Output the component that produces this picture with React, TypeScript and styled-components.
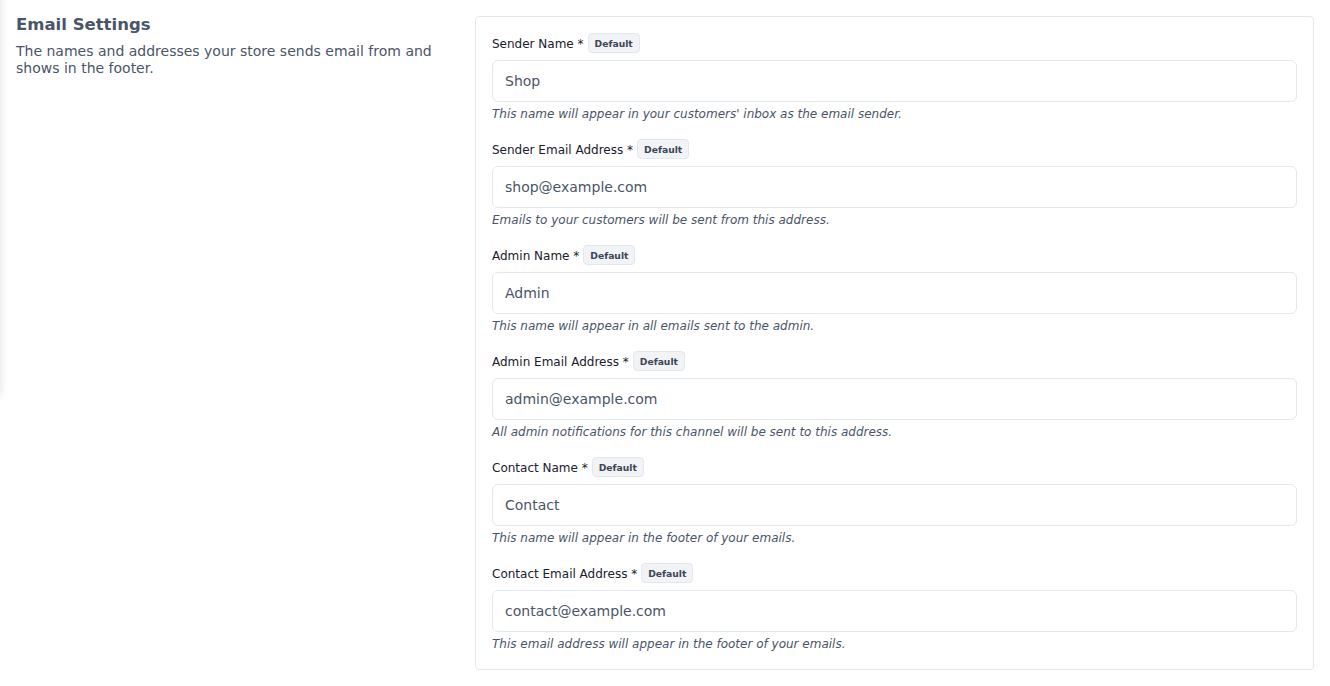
import React from "react";
import styled, { createGlobalStyle } from "styled-components";

const Global = createGlobalStyle`
  html, body { margin: 0; padding: 0; background: #fff; }
  body { font-family: "DejaVu Sans", "Liberation Sans", sans-serif; color: #1a202c; }
  * { box-sizing: border-box; }
`;

const Page = styled.div`
  position: relative;
  display: grid;
  grid-template-columns: 427px 1fr;
  column-gap: 32px;
  padding: 16px;
  align-items: start;
`;

const EdgeShadow = styled.div`
  position: absolute;
  left: -12px;
  top: -10px;
  width: 12px;
  height: 406px;
  background: #fff;
  box-shadow: 0 0 10px rgba(0, 0, 0, 0.13);
`;

const Intro = styled.div`
  display: flex;
  flex-direction: column;
  gap: 9px;
`;

const Title = styled.h2`
  margin: 0;
  font-size: 16.5px;
  line-height: 18px;
  font-weight: 700;
  color: #4a5568;
`;

const Description = styled.p`
  margin: 0;
  font-size: 14px;
  line-height: 17px;
  color: #4a5568;
`;

const Card = styled.div`
  border: 1px solid #e2e8f0;
  border-radius: 4px;
  padding: 16px 16px 17px;
  display: flex;
  flex-direction: column;
  gap: 17px;
`;

const Field = styled.div`
  display: flex;
  flex-direction: column;
`;

const LabelRow = styled.div`
  display: flex;
  align-items: center;
  gap: 4px;
  height: 20px;
  margin-bottom: 7px;
`;

const Label = styled.label`
  font-size: 12px;
  line-height: 20px;
  padding-top: 1px;
  color: #1a202c;
`;

const Badge = styled.span`
  display: inline-flex;
  align-items: center;
  height: 20px;
  padding: 0 6px;
  border: 1px solid #e2e8f0;
  border-radius: 4px;
  background: #f1f3f6;
  color: #3c4657;
  font-size: 9.2px;
  font-weight: 700;
`;

const Input = styled.input`
  height: 42px;
  width: 100%;
  border: 1px solid #e2e8f0;
  border-radius: 6px;
  padding: 0 12px;
  font-family: inherit;
  font-size: 14px;
  color: #4a5568;
  background: #fff;
  outline: none;
`;

const Help = styled.div`
  margin-top: 4px;
  font-size: 12px;
  line-height: 16px;
  font-style: italic;
  color: #4a5568;
`;

const fields = [
  { label: "Sender Name *", value: "Shop", help: "This name will appear in your customers' inbox as the email sender." },
  { label: "Sender Email Address *", value: "shop@example.com", help: "Emails to your customers will be sent from this address." },
  { label: "Admin Name *", value: "Admin", help: "This name will appear in all emails sent to the admin." },
  { label: "Admin Email Address *", value: "admin@example.com", help: "All admin notifications for this channel will be sent to this address." },
  { label: "Contact Name *", value: "Contact", help: "This name will appear in the footer of your emails." },
  { label: "Contact Email Address *", value: "contact@example.com", help: "This email address will appear in the footer of your emails." },
];

export default function App() {
  return (
    <>
      <Global />
      <Page>
        <EdgeShadow />
        <Intro>
          <Title>Email Settings</Title>
          <Description>The names and addresses your store sends email from and shows in the footer.</Description>
        </Intro>
        <Card>
          {fields.map((f) => (
            <Field key={f.label}>
              <LabelRow>
                <Label>{f.label}</Label>
                <Badge>Default</Badge>
              </LabelRow>
              <Input defaultValue={f.value} />
              <Help>{f.help}</Help>
            </Field>
          ))}
        </Card>
      </Page>
    </>
  );
}
